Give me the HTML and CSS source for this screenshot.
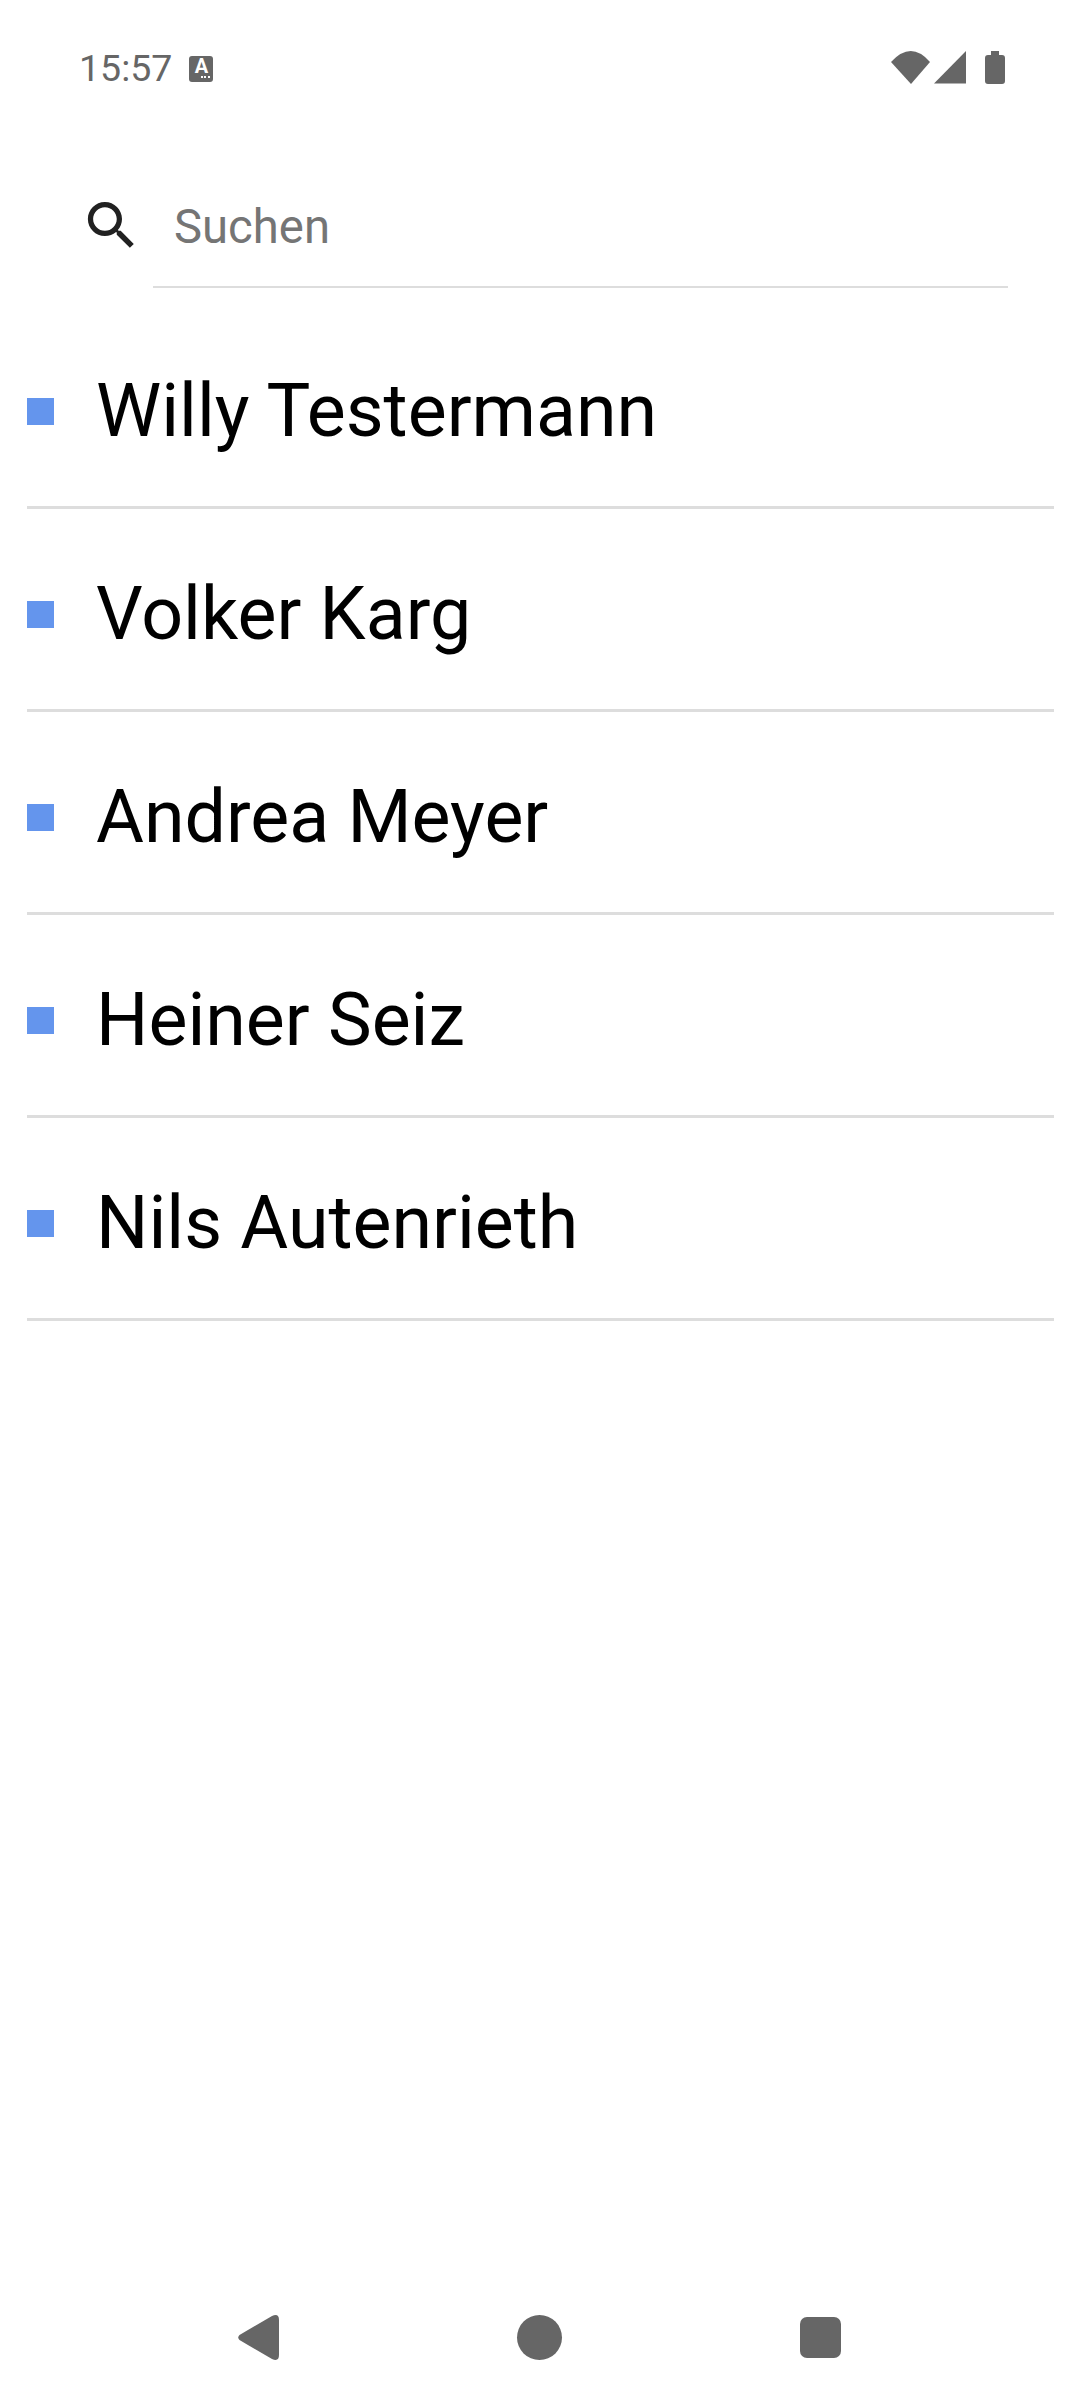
FILE: index.html
```html
<!DOCTYPE html>
<html lang="de">
<head>
    <meta charset="UTF-8">
    <meta name="viewport" content="width=device-width, initial-scale=1.0">
    <title>Kontakte</title>
    <link rel="stylesheet" href="styles.css">
</head>
<body>
    <div class="screen">
        <div class="statusBar">
            <span class="time">15:57</span>
            <span class="keyboardBadge">
                <span class="badgeLetter">A</span>
                <span class="badgeDots"><i></i><i></i><i></i></span>
            </span>
            <span class="statusIcons">
                <svg class="wifiIcon" width="39" height="33" viewBox="0 0 39 33"><path d="M20 33 L0 11 Q20 -11 39 11 Z" fill="#666666"/></svg>
                <svg class="signalIcon" width="32" height="33" viewBox="0 0 32 33"><path d="M0 32.5 L32 0 V32.5 Z" fill="#666666"/></svg>
                <svg class="batteryIcon" width="20" height="33" viewBox="0 0 20 33"><path d="M6 0 H14 V4 H17 Q20 4 20 7 V30 Q20 33 17 33 H3 Q0 33 0 30 V7 Q0 4 3 4 H6 Z" fill="#666666"/></svg>
            </span>
        </div>

        <div class="searchRow">
            <svg class="searchIcon" width="63" height="63" viewBox="0 0 24 24"><path d="M15.5 14h-.79l-.28-.27C15.41 12.59 16 11.11 16 9.5 16 5.91 13.09 3 9.5 3S3 5.91 3 9.5 5.91 16 9.5 16c1.61 0 3.09-.59 4.23-1.57l.27.28v.79l5 4.99L20.49 19l-4.99-5zm-6 0C7.01 14 5 11.99 5 9.5S7.01 5 9.5 5 14 7.01 14 9.5 11.99 14 9.5 14z" fill="#212121"/></svg>
            <div class="searchField">Suchen</div>
        </div>

        <ul class="contactList">
            <li class="contactRow"><span class="marker"></span><span class="contactName">Willy Testermann</span></li>
            <li class="contactRow"><span class="marker"></span><span class="contactName">Volker Karg</span></li>
            <li class="contactRow"><span class="marker"></span><span class="contactName">Andrea Meyer</span></li>
            <li class="contactRow"><span class="marker"></span><span class="contactName">Heiner Seiz</span></li>
            <li class="contactRow"><span class="marker"></span><span class="contactName">Nils Autenrieth</span></li>
        </ul>

        <div class="navBar">
            <svg class="navIcon" width="41" height="45" viewBox="0 0 41 45"><path d="M1.5 20 L34 1 Q41 -2 41 5 V40 Q41 47 34 44 L1.5 25 Q-1 22.5 1.5 20 Z" fill="#666666"/></svg>
            <span class="navCircle"></span>
            <span class="navSquare"></span>
        </div>
    </div>
</body>
</html>
```

FILE: styles.css
```css
* {
    box-sizing: border-box;
}
body {
    font-family: Roboto, "Noto Sans", sans-serif;
    background-color: #ffffff;
    margin: 0;
    padding: 0;
}
.screen {
    width: 1080px;
    height: 2400px;
    display: flex;
    flex-direction: column;
}
.statusBar {
    display: flex;
    align-items: center;
    height: 33px;
    margin-top: 51px;
    padding-left: 79px;
    padding-right: 75px;
}
.time {
    font-size: 37.5px;
    line-height: 33px;
    margin-top: 2px;
    color: #666666;
}
.keyboardBadge {
    width: 24px;
    height: 26px;
    margin-left: 17px;
    margin-top: 3px;
    background-color: #666666;
    border-radius: 3px;
    display: flex;
    flex-direction: column;
    align-items: center;
    color: #ffffff;
}
.badgeLetter {
    font-size: 20px;
    font-weight: 700;
    line-height: 20px;
}
.badgeDots {
    display: flex;
    gap: 1.5px;
    margin-left: 8px;
}
.badgeDots i {
    width: 2px;
    height: 2px;
    background-color: #ffffff;
}
.statusIcons {
    display: flex;
    margin-left: auto;
}
.signalIcon {
    margin-left: 4px;
}
.batteryIcon {
    margin-left: 19px;
}
.searchRow {
    display: flex;
    align-items: flex-start;
    margin-top: 110px;
    padding-left: 80px;
}
.searchIcon {
    flex: none;
}
.searchField {
    width: 855px;
    height: 94px;
    margin-left: 10px;
    padding-left: 21px;
    padding-top: 2px;
    font-size: 47.25px;
    line-height: 63px;
    color: #757575;
    border-bottom: 2px solid #dddddd;
}
.contactList {
    list-style: none;
    margin: 18px 0 0 0;
    padding: 0;
}
.contactRow {
    display: flex;
    align-items: center;
    height: 203px;
    margin: 0 26px 0 27px;
    padding-top: 10px;
    border-bottom: 3px solid #dddddd;
}
.marker {
    width: 27px;
    height: 27px;
    background-color: #6495ed;
    flex: none;
}
.contactName {
    font-size: 73.5px;
    line-height: 86px;
    color: #000000;
    margin-left: 42px;
}
.navBar {
    margin-top: auto;
    margin-bottom: 40px;
    height: 45px;
    display: flex;
    align-items: center;
    padding-left: 238px;
}
.navCircle {
    width: 45px;
    height: 45px;
    margin-left: 238px;
    border-radius: 50%;
    background-color: #666666;
}
.navSquare {
    width: 41px;
    height: 41px;
    margin-left: 238px;
    border-radius: 7px;
    background-color: #666666;
}
```
